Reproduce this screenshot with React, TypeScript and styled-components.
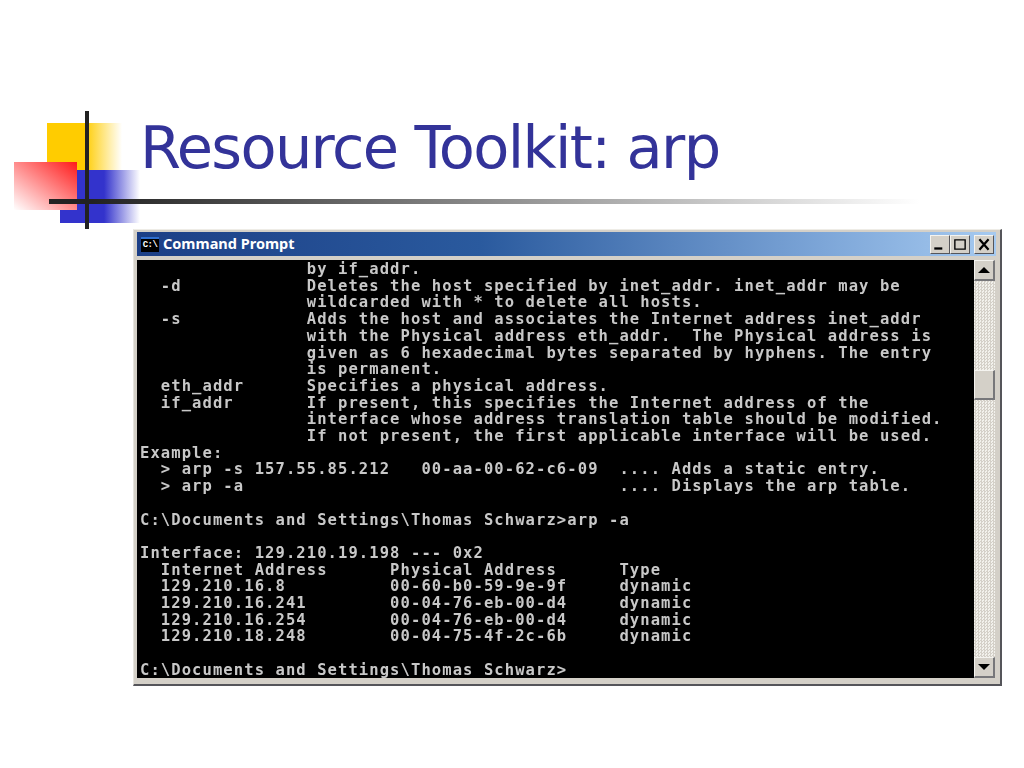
import styled, { createGlobalStyle } from "styled-components";
import type { ReactNode } from "react";

const GlobalStyle = createGlobalStyle`
    html, body {
        margin: 0;
        padding: 0;
        background: #fff;
    }
`

const Slide = styled.div`
    position: relative;
    width: 1024px;
    height: 768px;
    overflow: hidden;
    background: #fff;
    font-family: "Noto Sans", sans-serif;
`

const Decoration = styled.svg`
    position: absolute;
    left: 0;
    top: 0;
`

const Title = styled.h1`
    position: relative;
    margin: 0;
    padding: 108px 0 0 140px;
    height: 229px;
    box-sizing: border-box;
    font-family: "DejaVu Sans", sans-serif;
    font-size: 59px;
    font-weight: 400;
    line-height: 80px;
    letter-spacing: -1.65px;
    color: #333399;
    white-space: nowrap;
`

const Window = styled.div`
    position: relative;
    margin: 0 0 0 133px;
    width: 869px;
    height: 457px;
    box-sizing: border-box;
    padding: 2px 4px 6px 3px;
    background: #d4d0c8;
    border-top: 1px solid #eeece6;
    border-left: 1px solid #e6e4de;
    border-right: 2px solid #55555a;
    border-bottom: 2px solid #55555a;
    display: flex;
    flex-direction: column;
`

const TitleBar = styled.div`
    height: 24px;
    flex: none;
    display: flex;
    align-items: center;
    padding: 0 2px 0 4px;
    background: linear-gradient(90deg, #1c3f86 0%, #2a5a9e 40%, #7da6d8 80%, #a6caf0 100%);
`

const AppIcon = styled.div`
    width: 18px;
    height: 15px;
    flex: none;
    box-sizing: border-box;
    background: #000;
    border-top: 2px solid #2f6fd0;
    color: #fff;
    font-family: "Liberation Mono", monospace;
    font-size: 9px;
    font-weight: 700;
    line-height: 12px;
    letter-spacing: -0.6px;
    text-align: center;
    overflow: hidden;
`

const WindowName = styled.span`
    margin-left: 4px;
    margin-top: -3px;
    flex: 1;
    color: #fff;
    font-family: "Noto Sans", sans-serif;
    font-size: 14.5px;
    font-weight: 700;
    letter-spacing: 0;
`

const Controls = styled.div`
    display: flex;
    align-items: center;
`

const ControlButton = styled.div<{ $gap?: number }>`
    width: 20px;
    height: 19px;
    margin-left: ${props => props.$gap ?? 0}px;
    box-sizing: border-box;
    background: #d4d0c8;
    border-top: 1px solid #f4f3ef;
    border-left: 1px solid #f4f3ef;
    border-right: 1px solid #55555a;
    border-bottom: 1px solid #55555a;
    display: flex;
    align-items: center;
    justify-content: center;
`

const Body = styled.div`
    flex: 1;
    margin: 4px 1px 0 0;
    display: flex;
    min-height: 0;
`

const Console = styled.pre`
    flex: 1;
    min-width: 0;
    margin: 0;
    padding: 1px 0 0 3px;
    background: #000;
    color: #c8c8c8;
    font-family: "DejaVu Sans Mono", monospace;
    font-size: 15.5px;
    font-weight: 700;
    line-height: 16.7px;
    letter-spacing: 1.09px;
    filter: blur(0.35px);
`

const Scrollbar = styled.div`
    width: 21px;
    flex: none;
    display: flex;
    flex-direction: column;
    background-color: #eeede8;
    background-image: repeating-conic-gradient(#d4d0c8 0% 25%, #f2f1ec 0% 50%);
    background-size: 3px 3px;
`

const ScrollButton = styled.div`
    height: 21px;
    flex: none;
    box-sizing: border-box;
    background: #d4d0c8;
    border-top: 1px solid #f4f3ef;
    border-left: 1px solid #f4f3ef;
    border-right: 2px solid #77777a;
    border-bottom: 2px solid #77777a;
    display: flex;
    align-items: center;
    justify-content: center;
`

const Thumb = styled(ScrollButton)`
    height: 30px;
    margin-top: 89px;
    margin-bottom: auto;
`

const Triangle = styled.div<{ $down?: boolean }>`
    width: 0;
    height: 0;
    border-left: 6px solid transparent;
    border-right: 6px solid transparent;
    ${props => props.$down ? "border-top: 6px solid #000;" : "border-bottom: 6px solid #000;"}
`

function Control({ gap, children }: { gap?: number; children: ReactNode }) {
    return (
        <ControlButton $gap={gap}>
            <svg width="16" height="15" viewBox="0 0 14 13">{children}</svg>
        </ControlButton>
    )
}

const consoleText = [
    "                by if_addr.",
    "  -d            Deletes the host specified by inet_addr. inet_addr may be",
    "                wildcarded with * to delete all hosts.",
    "  -s            Adds the host and associates the Internet address inet_addr",
    "                with the Physical address eth_addr.  The Physical address is",
    "                given as 6 hexadecimal bytes separated by hyphens. The entry",
    "                is permanent.",
    "  eth_addr      Specifies a physical address.",
    "  if_addr       If present, this specifies the Internet address of the",
    "                interface whose address translation table should be modified.",
    "                If not present, the first applicable interface will be used.",
    "Example:",
    "  > arp -s 157.55.85.212   00-aa-00-62-c6-09  .... Adds a static entry.",
    "  > arp -a                                    .... Displays the arp table.",
    "",
    "C:\\Documents and Settings\\Thomas Schwarz>arp -a",
    "",
    "Interface: 129.210.19.198 --- 0x2",
    "  Internet Address      Physical Address      Type",
    "  129.210.16.8          00-60-b0-59-9e-9f     dynamic",
    "  129.210.16.241        00-04-76-eb-00-d4     dynamic",
    "  129.210.16.254        00-04-76-eb-00-d4     dynamic",
    "  129.210.18.248        00-04-75-4f-2c-6b     dynamic",
    "",
    "C:\\Documents and Settings\\Thomas Schwarz>",
].join("\n")

export default function App() {
    return (
        <Slide>
            <GlobalStyle />
            <Decoration width="1024" height="240" viewBox="0 0 1024 240">
                <defs>
                    <linearGradient id="yellow" x1="0" x2="1" y1="0" y2="0">
                        <stop offset="0.5" stopColor="#ffcc00" />
                        <stop offset="1" stopColor="#ffffff" />
                    </linearGradient>
                    <linearGradient id="blue" x1="0" x2="1" y1="0" y2="0">
                        <stop offset="0.55" stopColor="#3333cc" />
                        <stop offset="1" stopColor="#ffffff" />
                    </linearGradient>
                    <linearGradient id="red" x1="1" x2="0" y1="0" y2="1">
                        <stop offset="0" stopColor="#ff1a1a" />
                        <stop offset="1" stopColor="#ffffff" />
                    </linearGradient>
                    <linearGradient id="rule" x1="0" x2="1" y1="0" y2="0">
                        <stop offset="0.05" stopColor="#222222" />
                        <stop offset="1" stopColor="#ffffff" />
                    </linearGradient>
                </defs>
                <rect x="47" y="123" width="75" height="47" fill="url(#yellow)" />
                <rect x="60" y="170" width="80" height="53" fill="url(#blue)" />
                <rect x="14" y="162" width="63" height="48" fill="url(#red)" />
                <rect x="49" y="199" width="871" height="5" fill="url(#rule)" />
                <rect x="85" y="111" width="4" height="118" fill="#222222" />
            </Decoration>
            <Title>Resource Toolkit: arp</Title>
            <Window>
                <TitleBar>
                    <AppIcon>C:\</AppIcon>
                    <WindowName>Command Prompt</WindowName>
                    <Controls>
                        <Control>
                            <rect x="2" y="9" width="7" height="2" fill="#000" />
                        </Control>
                        <Control>
                            <path d="M2.5 2.5h9v8h-9z M2 2.5h10" fill="none" stroke="#000" strokeWidth="1.2" />
                        </Control>
                        <Control gap={4}>
                            <path d="M3 2l8 9M11 2l-8 9" fill="none" stroke="#000" strokeWidth="2" />
                        </Control>
                    </Controls>
                </TitleBar>
                <Body>
                    <Console>{consoleText}</Console>
                    <Scrollbar>
                        <ScrollButton><Triangle /></ScrollButton>
                        <Thumb />
                        <ScrollButton><Triangle $down /></ScrollButton>
                    </Scrollbar>
                </Body>
            </Window>
        </Slide>
    )
}
